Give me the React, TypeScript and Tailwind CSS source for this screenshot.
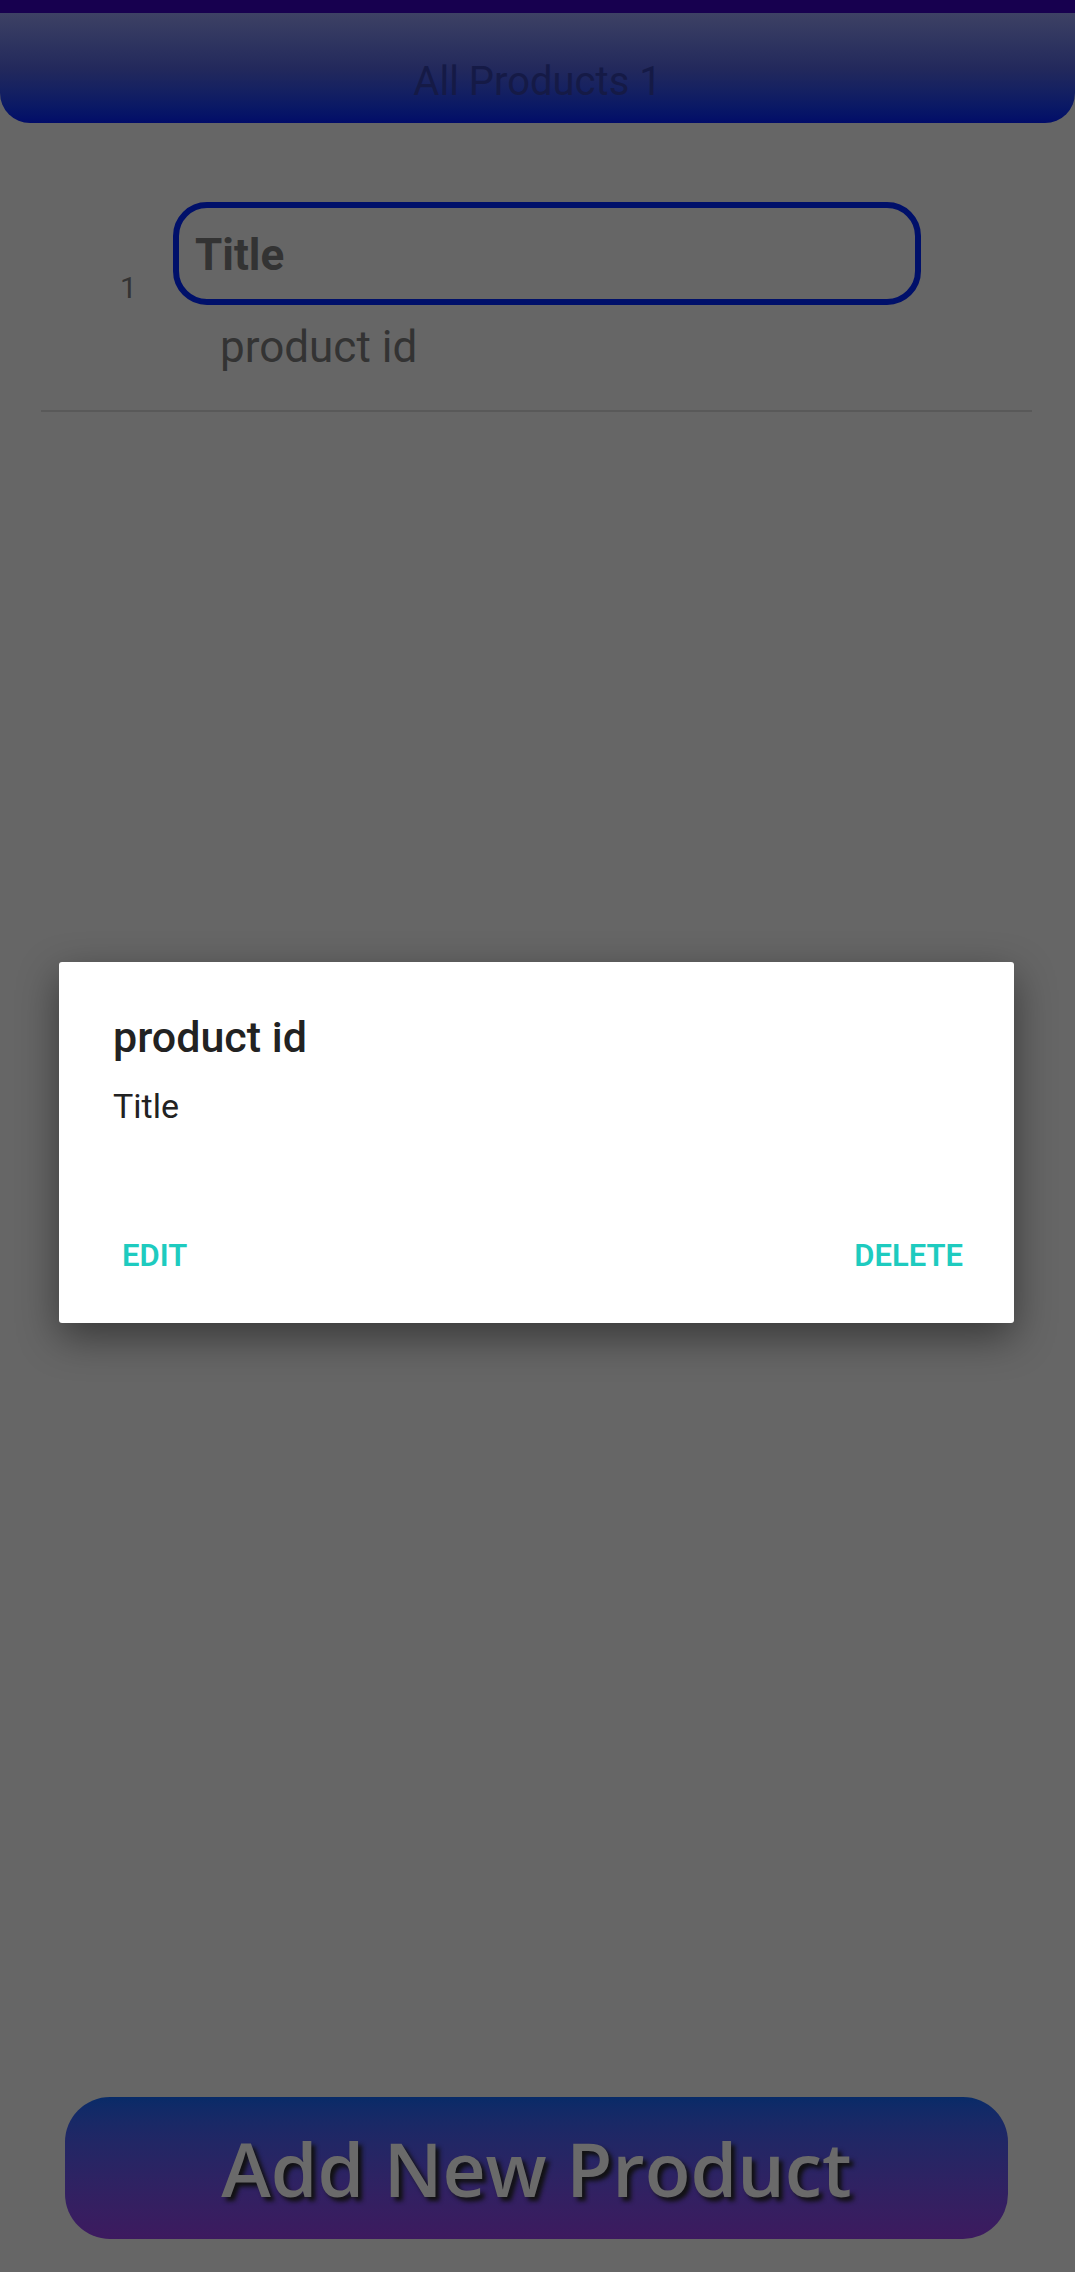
import React from 'react';

type Product = {
  no: number;
  title: string;
  id: string;
};

const products: Product[] = [{ no: 1, title: 'Title', id: 'product id' }];

const ProductRow = ({ product }: { product: Product }): React.ReactElement => (
  <div>
    <div className="flex items-center pl-[120px]">
      <span className="mb-[8px] w-[17px] text-[30px] text-[#333333]">{product.no}</span>
      <div className="ml-[36px] flex flex-col">
        <div className="flex h-[103px] w-[748px] items-center rounded-[34px] border-[6px] border-[#00106a] pl-[16px] pt-[3px]">
          <span className="text-[44px] font-bold text-[#333333]">{product.title}</span>
        </div>
        <p className="ml-[47px] mt-[9px] text-[44px] text-[#333333]">{product.id}</p>
      </div>
    </div>
    <div className="ml-[41px] mr-[43px] mt-[30px] h-[2px] bg-[#595959]" />
  </div>
);

const App = (): React.ReactElement => (
  <div className="relative flex min-h-[2272px] flex-col bg-[#666666] font-['Roboto',sans-serif]">
    {/* status bar */}
    <div className="h-[13px] bg-[#17004f]" />

    <header className="h-[110px] rounded-b-[30px] bg-linear-to-b from-[#3d4164] via-[#23295c] to-[#020c69] pt-[39px] text-center">
      <h1 className="text-[40px] text-[#151a46]">All Products {products.length}</h1>
    </header>

    <div className="mt-[79px]">
      {products.map((product) => (
        <ProductRow key={product.id} product={product} />
      ))}
    </div>

    <button
      type="button"
      className="mb-[33px] ml-[65px] mr-[67px] mt-auto flex h-[142px] items-center justify-center rounded-[45px] bg-linear-to-b from-[#082b68] to-[#3d1a5f]"
    >
      <span className="font-['Open_Sans',sans-serif] text-[75px] font-semibold leading-none text-[#6a6a6a] [text-shadow:4px_4px_4px_#111111]">
        Add New Product
      </span>
    </button>

    {/* dialog */}
    <div className="absolute left-[59px] top-[962px] flex h-[361px] w-[955px] flex-col rounded-[3px] bg-white shadow-[0_14px_40px_rgba(0,0,0,0.45)]">
      <h2 className="pl-[54px] pt-[43px] text-[43px] font-medium text-[#222222]">product id</h2>
      <p className="mt-[11px] pl-[54px] text-[34px] text-[#222222]">Title</p>
      <div className="mt-auto flex justify-between pb-[44px] pl-[63px] pr-[51px]">
        <button type="button" className="text-[31px] font-semibold text-[#1ecbbf]">
          EDIT
        </button>
        <button type="button" className="text-[31px] font-semibold text-[#1ecbbf]">
          DELETE
        </button>
      </div>
    </div>
  </div>
);

export default App;
